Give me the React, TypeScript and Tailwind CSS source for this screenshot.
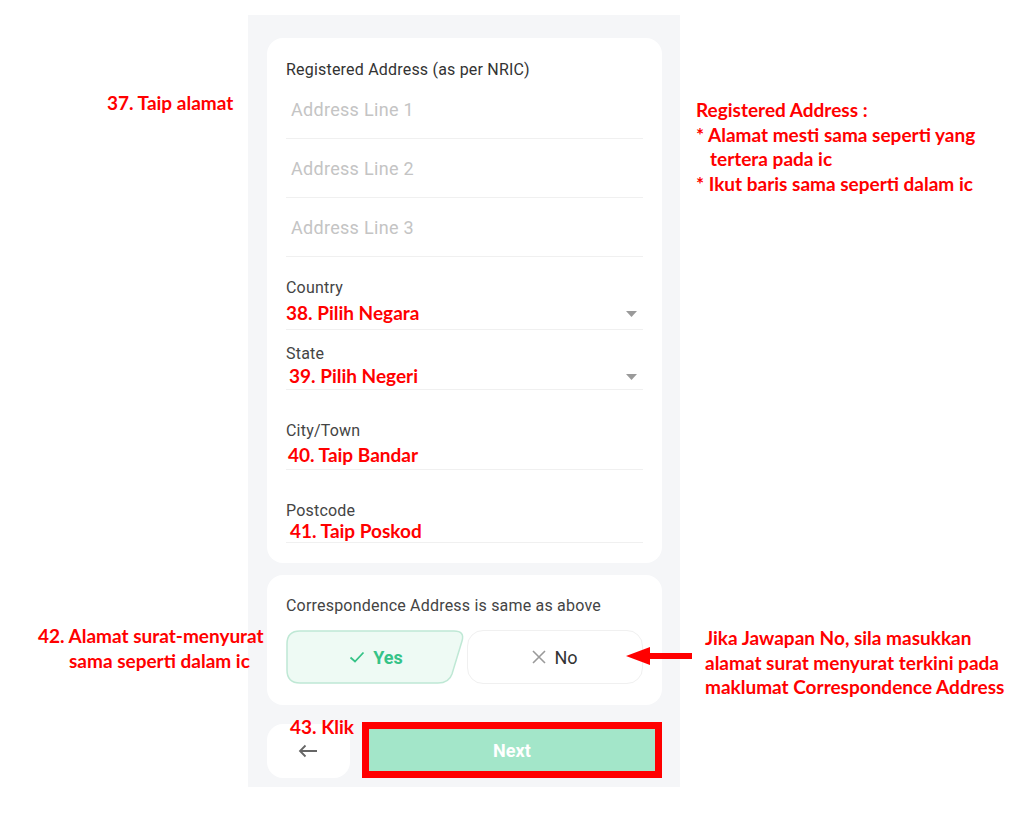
import React from "react";

const note = "font-['Lato','Open_Sans',sans-serif] font-bold text-[19px] leading-[24.5px] text-[#ff0000]";

function Caret() {
  return (
    <svg width="11" height="6" viewBox="0 0 11 6" className="shrink-0">
      <path d="M0 0 H11 L5.5 6 Z" fill="#9a9a9a" />
    </svg>
  );
}

function AddressLine({ placeholder }: { placeholder: string }) {
  return (
    <div className="h-[59px] flex items-center pl-[5px] border-b border-[#f0f0f0] text-[18px] tracking-[0.3px] text-[#c4c4c4]">
      {placeholder}
    </div>
  );
}

function Field({
  label,
  value,
  select,
  className,
  rowClass,
}: {
  label: string;
  value: string;
  select?: boolean;
  className?: string;
  rowClass: string;
}) {
  return (
    <div className={className}>
      <div className="text-[16px] leading-[20px] tracking-[0.2px] text-[#444]">{label}</div>
      <div className={`flex items-center justify-between border-b border-[#f0f0f0] ${rowClass}`}>
        <span className={note}>{value}</span>
        {select && (
          <span className="mr-[6px]">
            <Caret />
          </span>
        )}
      </div>
    </div>
  );
}

function YesButton() {
  return (
    <div className="relative w-[180px] h-[54px] flex items-center justify-center">
      <svg width="180" height="54" viewBox="0 0 180 54" className="absolute inset-0">
        <path
          d="M14 1 H168 Q179 1 176 11 L166 44 Q163 53 152 53 H14 Q1 53 1 40 V14 Q1 1 14 1 Z"
          fill="#eefaf4"
          stroke="#bfe8d5"
          strokeWidth="1.5"
        />
      </svg>
      <span className="relative flex items-center gap-[8px] text-[18px] font-bold text-[#35c387]">
        <svg width="16" height="12" viewBox="0 0 16 12">
          <path d="M1.5 6.5 L6 10.5 L14.5 1.5" fill="none" stroke="#35c387" strokeWidth="1.8" />
        </svg>
        Yes
      </span>
    </div>
  );
}

export default function App() {
  return (
    <div className="relative w-[1024px] h-[825px] bg-white overflow-hidden font-['Roboto',sans-serif]">
      {/* phone screenshot */}
      <div className="ml-[248px] mt-[15px] w-[432px] bg-[#f5f6f8] pt-[23px] pl-[19px] pr-[18px] pb-[9px]">
        <div className="rounded-2xl bg-white px-[19px] pt-[22px] pb-[20px]">
          <div className="text-[16px] leading-[20px] tracking-[0.2px] text-[#333]">Registered Address (as per NRIC)</div>
          <AddressLine placeholder="Address Line 1" />
          <AddressLine placeholder="Address Line 2" />
          <AddressLine placeholder="Address Line 3" />
          <Field className="mt-[21px]" rowClass="h-[32px]" label="Country" value="38. Pilih Negara" select />
          <Field className="mt-[14px]" rowClass="h-[26px] pl-[3px]" label="State" value="39. Pilih Negeri" select />
          <Field className="mt-[31px]" rowClass="h-[29px] pl-[2px]" label="City/Town" value="40. Taip Bandar" />
          <Field className="mt-[31px]" rowClass="h-[22px] pl-[4px]" label="Postcode" value="41. Taip Poskod" />
        </div>

        <div className="mt-[12px] rounded-2xl bg-white px-[19px] pt-[21px] pb-[21px]">
          <div className="text-[16px] leading-[20px] tracking-[0.2px] text-[#444]">Correspondence Address is same as above</div>
          <div className="mt-[14px] flex gap-[1px]">
            <YesButton />
            <div className="flex-1 h-[54px] rounded-2xl border border-[#f0f0f0] bg-white flex items-center justify-center gap-[8px] text-[18px] text-[#333]">
              <svg width="14" height="14" viewBox="0 0 14 14">
                <path d="M1 1 L13 13 M13 1 L1 13" stroke="#9a9a9a" strokeWidth="1.6" />
              </svg>
              No
            </div>
          </div>
        </div>

        <div className="mt-[17px] flex items-end gap-[12px]">
          <div className="w-[83px] h-[54px] rounded-2xl bg-white flex items-center justify-center">
            <svg width="20" height="14" viewBox="0 0 20 14">
              <path d="M19 7 H2 M7.5 1.5 L2 7 L7.5 12.5" fill="none" stroke="#666" strokeWidth="1.8" />
            </svg>
          </div>
          <div className="w-[301px] h-[56px] border-[7px] border-[#ff0000] bg-[#a3e6c9] flex items-center justify-center text-[18px] font-bold text-white">
            Next
          </div>
        </div>
      </div>

      {/* annotations */}
      <div className={`absolute left-[107px] top-[91px] ${note}`}>37. Taip alamat</div>

      <div className={`absolute left-[696px] top-[98px] ${note}`}>
        <div>Registered Address :</div>
        <div>* Alamat mesti sama seperti yang</div>
        <div className="pl-[14px]">tertera pada ic</div>
        <div>* Ikut baris sama seperti dalam ic</div>
      </div>

      <div className={`absolute left-[38px] top-[624px] ${note}`}>
        <div>42. Alamat surat-menyurat</div>
        <div className="pl-[31px]">sama seperti dalam ic</div>
      </div>

      <svg width="68" height="22" viewBox="0 0 68 22" className="absolute left-[626px] top-[645px]">
        <path d="M0 11 L24 2 V8 H66 V14 H24 V20 Z" fill="#ff0000" />
      </svg>

      <div className={`absolute left-[705px] top-[626px] ${note}`}>
        <div>Jika Jawapan No, sila masukkan</div>
        <div>alamat surat menyurat terkini pada</div>
        <div>maklumat Correspondence Address</div>
      </div>

      <div className={`absolute left-[290px] top-[715px] ${note}`}>43. Klik</div>
    </div>
  );
}
